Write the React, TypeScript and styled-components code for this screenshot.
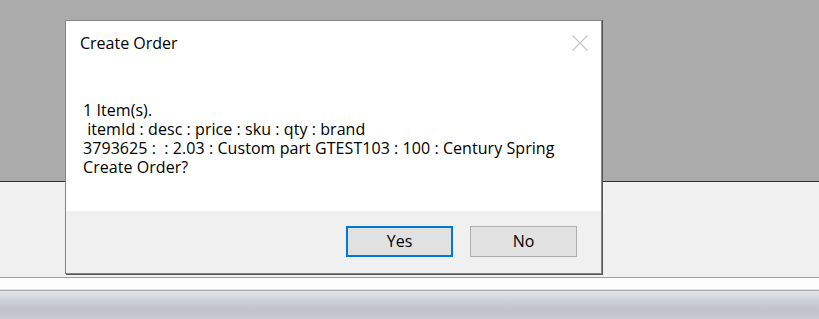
import { FC } from 'react'
import styled, { createGlobalStyle } from 'styled-components'

const GlobalStyle = createGlobalStyle`
    html, body {
        margin: 0;
        padding: 0;
        background: #f0f0f0;
    }
    body {
        font-family: "Open Sans", "Noto Sans", sans-serif;
    }
`;

const Page = styled.div`
    position: relative;
    width: 819px;
    height: 319px;
    overflow: hidden;
    display: flex;
    flex-direction: column;
`;

const TopPane = styled.div`
    height: 181px;
    background: #ababab;
    border-bottom: 1px solid #2e2e2e;
    box-shadow: 0 1px 0 #8a8a8a;
`;

const LowerPane = styled.div`
    flex: 1;
    background: #f0f0f0;
    border-bottom: 1px solid #a0a0a0;
`;

const StatusStrip = styled.div`
    height: 41px;
    display: flex;
    flex-direction: column;
`;

const StripWhite = styled.div`
    height: 11px;
    background: #fdfdfd;
    border-bottom: 1px solid #e2e2e2;
`;

const StripBar = styled.div`
    flex: 1;
    border-top: 1px solid #a6a8ad;
    background: linear-gradient(#e4e6ea 0%, #cdd0d7 35%, #bfc2ca 70%, #c9ccd2 100%);
`;

const Dialog = styled.div`
    position: absolute;
    left: 65px;
    top: 20px;
    width: 535px;
    height: 252px;
    background: #ffffff;
    border: 1px solid #858585;
    box-shadow: 1px 0 0 #555555, 1px 1px 0 #555555;
    display: flex;
    flex-direction: column;
    color: #000;
    font-size: 16px;
    line-height: 19px;
`;

const Header = styled.div`
    height: 45px;
    box-sizing: border-box;
    padding: 13px 0 0 14px;
    display: flex;
    justify-content: space-between;
    align-items: flex-start;
`;

const Title = styled.div`
    letter-spacing: 0;
`;

const CloseButton = styled.div`
    width: 16px;
    height: 16px;
    margin: 1px 13px 0 0;
    svg {
        display: block;
    }
`;

const Body = styled.div`
    flex: 1;
    padding: 35px 0 0 17px;
`;

const Line = styled.div`
    white-space: pre;
    letter-spacing: 0.06px;
`;

const Footer = styled.div`
    height: 62px;
    box-sizing: border-box;
    background: #f0f0f0;
    padding: 15px 24px 0 0;
    display: flex;
    justify-content: flex-end;
    align-items: flex-start;
    gap: 17px;
`;

const Button = styled.div<{ $focused?: boolean }>`
    width: 107px;
    height: 31px;
    box-sizing: border-box;
    background: #e1e1e1;
    border: ${p => p.$focused ? '2px solid #0078d7' : '1px solid #adadad'};
    display: flex;
    align-items: center;
    justify-content: center;
    font-size: 16px;
`;

const lines = [
    '1 Item(s).',
    ' itemId : desc : price : sku : qty : brand',
    '3793625 :  : 2.03 : Custom part GTEST103 : 100 : Century Spring',
    'Create Order?',
]

const CloseIcon = () => (
    <svg width="16" height="16" viewBox="0 0 16 16">
        <path d="M0.5 0.5 L15.5 15.5 M15.5 0.5 L0.5 15.5" stroke="#c6c6c6" strokeWidth="1.1" fill="none" />
    </svg>
)

const App: FC = () => {
    return (
        <>
            <GlobalStyle />
            <Page>
                <TopPane />
                <LowerPane />
                <StatusStrip>
                    <StripWhite />
                    <StripBar />
                </StatusStrip>

                <Dialog>
                    <Header>
                        <Title>Create Order</Title>
                        <CloseButton><CloseIcon /></CloseButton>
                    </Header>
                    <Body>
                        {lines.map((l, i) => <Line key={i}>{l}</Line>)}
                    </Body>
                    <Footer>
                        <Button $focused>Yes</Button>
                        <Button>No</Button>
                    </Footer>
                </Dialog>
            </Page>
        </>
    )
}

export default App
